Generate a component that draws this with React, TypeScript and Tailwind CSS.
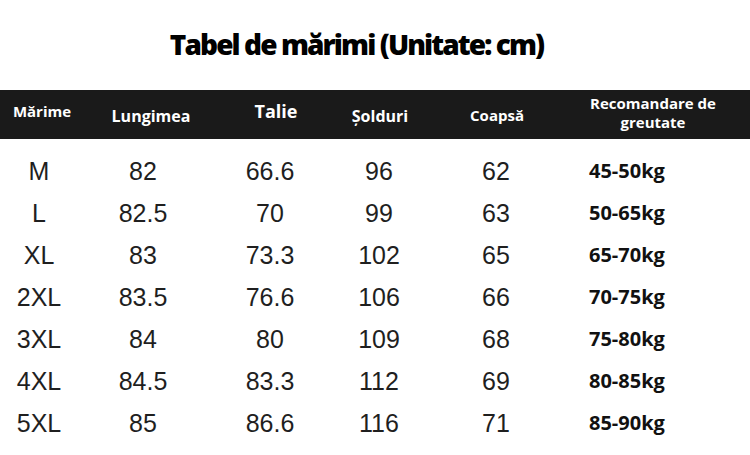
import React from "react";

const rows = [
  ["M", "82", "66.6", "96", "62", "45-50kg"],
  ["L", "82.5", "70", "99", "63", "50-65kg"],
  ["XL", "83", "73.3", "102", "65", "65-70kg"],
  ["2XL", "83.5", "76.6", "106", "66", "70-75kg"],
  ["3XL", "84", "80", "109", "68", "75-80kg"],
  ["4XL", "84.5", "83.3", "112", "69", "80-85kg"],
  ["5XL", "85", "86.6", "116", "71", "85-90kg"],
];

const sans = "font-['Open_Sans',sans-serif]";
const arial = "font-['Liberation_Sans',Arial,sans-serif]";

export default function App() {
  return (
    <div className="w-[750px] h-[455px] bg-white overflow-hidden">
      <div className="h-[90px] flex items-center justify-center pr-[37px] pb-[2px]">
        <h1 className={`${sans} font-extrabold text-[28px] leading-none tracking-[-1.9px] text-black`}>
          Tabel de mărimi (Unitate: cm)
        </h1>
      </div>
      <div
        className={`${sans} h-[49px] bg-[#1a1a1a] text-white font-bold grid grid-cols-[84px_134px_116px_92px_142px_170px] items-center`}
      >
        <div className="text-center text-[15px] leading-none pb-[6px]">Mărime</div>
        <div className="text-center text-[16px] leading-none pt-[3px]">Lungimea</div>
        <div className="text-center text-[18px] leading-none pb-[8px]">Talie</div>
        <div className="text-center text-[16px] leading-none pt-[2px]">Șolduri</div>
        <div className="text-center text-[15px] leading-none pt-[2px]">Coapsă</div>
        <div className="text-center text-[15px] leading-[19px] pb-[4px]">
          Recomandare de
          <br />
          greutate
        </div>
      </div>
      <div className="pt-[11px]">
        {rows.map((r) => (
          <div
            key={r[0]}
            className="h-[42px] grid grid-cols-[78px_130px_124px_94px_140px_1fr] items-center"
          >
            {r.slice(0, 5).map((c, i) => (
              <div
                key={i}
                className={`${arial} text-center text-[25px] leading-none text-[#1f1f1f]`}
              >
                {c}
              </div>
            ))}
            <div className={`${sans} pl-[23px] text-[20px] leading-none font-bold text-[#111]`}>
              {r[5]}
            </div>
          </div>
        ))}
      </div>
    </div>
  );
}
